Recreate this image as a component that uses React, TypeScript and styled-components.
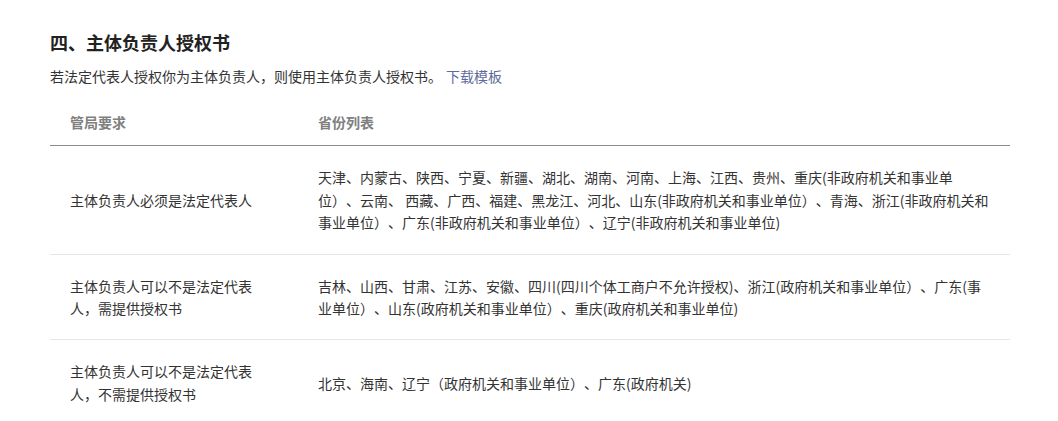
import React from "react";
import styled, { createGlobalStyle } from "styled-components";

const GlobalStyle = createGlobalStyle`
  html, body { margin: 0; padding: 0; background: #ffffff; }
  body {
    font-family: "Noto Sans CJK SC", "Noto Sans", sans-serif;
    color: #333333;
    text-spacing-trim: space-all;
  }
`;

const Page = styled.div`
  padding: 28px 48px 0 50px;
`;

const Title = styled.h2`
  margin: 0;
  font-size: 18px;
  line-height: 28px;
  font-weight: 700;
  color: #222222;
`;

const Desc = styled.p`
  margin: 9px 0 0;
  font-size: 14px;
  line-height: 22.4px;
  color: #333333;
`;

const Link = styled.a`
  color: #5c6b9c;
  text-decoration: none;
  margin-left: 4px;
  cursor: pointer;
`;

const Table = styled.div`
  margin-top: 12px;
  display: flex;
  flex-direction: column;
`;

const Row = styled.div<{ $head?: boolean }>`
  display: grid;
  grid-template-columns: 268px 1fr;
  align-items: center;
  border-bottom: 1px solid ${(p) => (p.$head ? "#8c8c8c" : "#e6e6e6")};
  padding: ${(p) => (p.$head ? "12px 0 11.6px" : "20px 0")};
  font-size: 14px;
  line-height: 22.4px;
  color: ${(p) => (p.$head ? "#808080" : "#333333")};
  font-weight: ${(p) => (p.$head ? 700 : 400)};
`;

const ReqCell = styled.div`
  padding: 0 60px 0 20px;
`;

const ProvCell = styled.div`
  padding-right: 18px;
`;

const rows = [
  {
    req: "主体负责人必须是法定代表人",
    prov:
      "天津、内蒙古、陕西、宁夏、新疆、湖北、湖南、河南、上海、江西、贵州、重庆(非政府机关和事业单位）、云南、 西藏、广西、福建、黑龙江、河北、山东(非政府机关和事业单位）、青海、浙江(非政府机关和事业单位）、广东(非政府机关和事业单位）、辽宁(非政府机关和事业单位)",
  },
  {
    req: "主体负责人可以不是法定代表人，需提供授权书",
    prov:
      "吉林、山西、甘肃、江苏、安徽、四川(四川个体工商户不允许授权)、浙江(政府机关和事业单位）、广东(事业单位）、山东(政府机关和事业单位）、重庆(政府机关和事业单位)",
  },
  {
    req: "主体负责人可以不是法定代表人，不需提供授权书",
    prov: "北京、海南、辽宁（政府机关和事业单位）、广东(政府机关)",
  },
];

export default function App() {
  return (
    <>
      <GlobalStyle />
      <Page>
        <Title>四、主体负责人授权书</Title>
        <Desc>
          若法定代表人授权你为主体负责人，则使用主体负责人授权书。
          <Link>下载模板</Link>
        </Desc>
        <Table>
          <Row $head>
            <ReqCell>管局要求</ReqCell>
            <ProvCell>省份列表</ProvCell>
          </Row>
          {rows.map((r) => (
            <Row key={r.req}>
              <ReqCell>{r.req}</ReqCell>
              <ProvCell>{r.prov}</ProvCell>
            </Row>
          ))}
        </Table>
      </Page>
    </>
  );
}
